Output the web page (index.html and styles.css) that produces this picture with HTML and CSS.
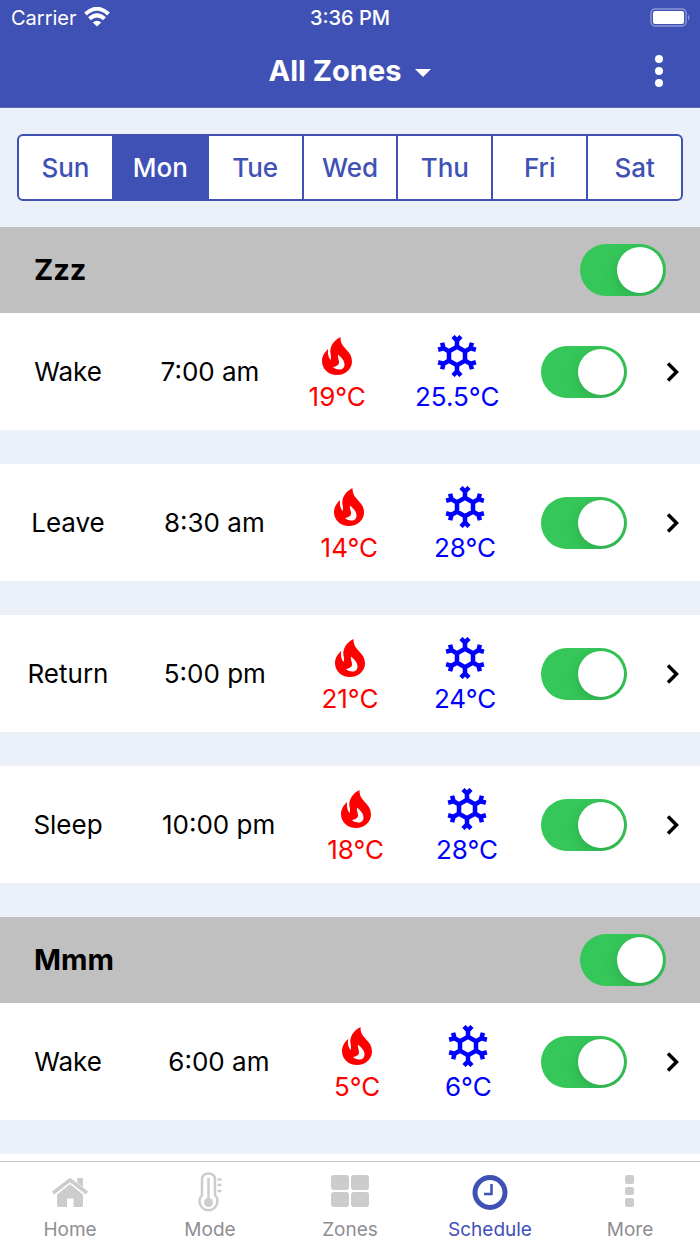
FILE: index.html
```html
<!DOCTYPE html>
<html lang="en">
<head>
<meta charset="utf-8">
<meta name="viewport" content="width=device-width, initial-scale=1">
<title>Schedule</title>
<link rel="stylesheet" href="styles.css">
</head>
<body>
<svg class="sprite" aria-hidden="true">
  <symbol id="flame" viewBox="0 0 30 38">
    <path fill-rule="evenodd" d="M18.500 0C11 4 7.500 10 8.500 16.500C9 19 9.500 21 8.500 23C6.500 20.500 5.500 17 6 12C2.500 15.500 0 19 0 24C0 32 6.500 38 15 38C23.500 38 30 32 30 24.500C30 12.500 18 12 18.500 0ZM16 17.500C19.500 20.500 22.500 23.500 22.500 27.500C22.500 30.500 20.500 32.500 17.500 32.500C14.500 32.500 12 31.500 11 30C14.500 29.500 16.500 28 17 26C17.500 23.500 15.500 21.500 16 17.500Z"/>
  </symbol>
  <symbol id="snow" viewBox="-21 -21 42 42">
    <g fill="none" stroke="currentColor" stroke-width="4.500">
      <path d="M0-9.200L8-4.600V4.600L0 9.200L-8 4.600V-4.600Z"/>
      <g id="arm"><path d="M0-8V-16M-4-19.500L0-15.500L4-19.500"/></g>
      <use href="#arm" transform="rotate(60)"/><use href="#arm" transform="rotate(120)"/><use href="#arm" transform="rotate(180)"/><use href="#arm" transform="rotate(240)"/><use href="#arm" transform="rotate(300)"/>
    </g>
  </symbol>
  <symbol id="chevron" viewBox="0 0 14 22"><path d="M2.500 2.500L11 11L2.500 19.500" fill="none" stroke="currentColor" stroke-width="3.500"/></symbol>
</svg>
<div class="app">
  <header class="top">
    <div class="status">
      <span class="carrier">Carrier
        <svg width="26" height="20" viewBox="0 0 26 20" fill="none" stroke="currentColor" stroke-width="4"><path d="M1.500 7Q13-3.500 24.500 7M5.500 11.800Q13 5 20.500 11.800"/><path d="M13 19.500L8.800 15.500Q13 12 17.200 15.500Z" fill="currentColor" stroke="none"/></svg>
      </span>
      <span class="clock">3:36 PM</span>
      <svg class="battery" width="41" height="20" viewBox="1 0 41 20"><rect x="2" y="1" width="35" height="17" rx="4" fill="none" stroke="#8c97d3" stroke-width="1.500"/><rect x="4" y="3" width="31" height="13" rx="2" fill="#fff"/><path d="M39 6.500Q42 9.500 39 12.500Z" fill="#8c97d3"/></svg>
    </div>
    <div class="titlebar">
      <button class="zone" type="button">All Zones <svg width="16" height="8" viewBox="0 0 16 8"><path d="M0 0H16L8 8Z" fill="currentColor"/></svg></button>
      <button class="menu" type="button" aria-label="Menu"><svg width="8" height="32" viewBox="0 0 8 32" fill="currentColor"><circle cx="4" cy="4" r="4"/><circle cx="4" cy="16" r="4"/><circle cx="4" cy="28" r="4"/></svg></button>
    </div>
  </header>
  <main class="content">
    <div class="days" role="group" aria-label="Day">
      <button class="day" type="button">Sun</button><button class="day selected" type="button" aria-pressed="true">Mon</button><button class="day" type="button">Tue</button><button class="day" type="button">Wed</button><button class="day" type="button">Thu</button><button class="day" type="button">Fri</button><button class="day" type="button">Sat</button>
    </div>
    <section>
      <div class="group"><h2 id="zzz">Zzz</h2><input class="switch" type="checkbox" role="switch" checked aria-labelledby="zzz"></div>
      <div class="row"><label class="name" for="s1">Wake</label><div class="values"><span>7:00 am</span><span class="temp heat"><svg class="flame"><use href="#flame"/></svg>19°C</span><span class="temp cool"><svg class="snow"><use href="#snow"/></svg>25.5°C</span></div><input class="switch" id="s1" type="checkbox" role="switch" checked><button class="next" type="button" aria-label="Edit Wake"><svg class="chevron"><use href="#chevron"/></svg></button></div>
      <div class="row"><label class="name" for="s2">Leave</label><div class="values"><span>8:30 am</span><span class="temp heat"><svg class="flame"><use href="#flame"/></svg>14°C</span><span class="temp cool"><svg class="snow"><use href="#snow"/></svg>28°C</span></div><input class="switch" id="s2" type="checkbox" role="switch" checked><button class="next" type="button" aria-label="Edit Leave"><svg class="chevron"><use href="#chevron"/></svg></button></div>
      <div class="row"><label class="name" for="s3">Return</label><div class="values"><span>5:00 pm</span><span class="temp heat"><svg class="flame"><use href="#flame"/></svg>21°C</span><span class="temp cool"><svg class="snow"><use href="#snow"/></svg>24°C</span></div><input class="switch" id="s3" type="checkbox" role="switch" checked><button class="next" type="button" aria-label="Edit Return"><svg class="chevron"><use href="#chevron"/></svg></button></div>
      <div class="row"><label class="name" for="s4">Sleep</label><div class="values"><span>10:00 pm</span><span class="temp heat"><svg class="flame"><use href="#flame"/></svg>18°C</span><span class="temp cool"><svg class="snow"><use href="#snow"/></svg>28°C</span></div><input class="switch" id="s4" type="checkbox" role="switch" checked><button class="next" type="button" aria-label="Edit Sleep"><svg class="chevron"><use href="#chevron"/></svg></button></div>
    </section>
    <section>
      <div class="group"><h2 id="mmm">Mmm</h2><input class="switch" type="checkbox" role="switch" checked aria-labelledby="mmm"></div>
      <div class="row"><label class="name" for="s5">Wake</label><div class="values"><span>6:00 am</span><span class="temp heat"><svg class="flame"><use href="#flame"/></svg>5°C</span><span class="temp cool"><svg class="snow"><use href="#snow"/></svg>6°C</span></div><input class="switch" id="s5" type="checkbox" role="switch" checked><button class="next" type="button" aria-label="Edit Wake"><svg class="chevron"><use href="#chevron"/></svg></button></div>
      <div class="row"></div>
    </section>
  </main>
  <nav class="tabs">
    <a class="tab" href="#home"><svg class="icon" viewBox="0 0 40 44"><g fill="currentColor"><path d="M20 13L33 23.500V34.500Q33 36 31.500 36H23.500V27.500H17V36H8.500Q7 36 7 34.500V23.500Z"/><path d="M27.500 7H33V18L27.500 13.500Z"/></g><path d="M3 22L20 9L37 22" fill="none" stroke="#fff" stroke-width="6"/><path d="M27.500 7H33V16L27.500 12Z" fill="currentColor"/><path d="M3 22L20 9L37 22" fill="none" stroke="currentColor" stroke-width="3.500" stroke-linejoin="round"/></svg>Home</a>
    <a class="tab" href="#mode"><svg class="icon" viewBox="0 0 40 44" fill="none" stroke="currentColor"><path stroke-width="2.500" d="M12 24V9Q12 2.500 18.500 2.500T25 9V24A9 9 0 1 1 12 24Z"/><path stroke-width="2.500" d="M18.500 7V32M27.500 8.500H31.500M27.500 14H31.500M27.500 20H31.500"/><circle cx="18.500" cy="31.500" r="4.500" fill="currentColor" stroke="none"/></svg>Mode</a>
    <a class="tab" href="#zones"><svg class="icon" viewBox="0 0 40 44" fill="currentColor"><rect x="1" y="4" width="18" height="15" rx="3"/><rect x="21" y="4" width="18" height="15" rx="3"/><rect x="1" y="21" width="18" height="15" rx="3"/><rect x="21" y="21" width="18" height="15" rx="3"/></svg>Zones</a>
    <a class="tab active" href="#schedule" aria-current="page"><svg class="icon" viewBox="0 0 40 44" fill="none" stroke="currentColor"><circle cx="20" cy="21.500" r="15" stroke-width="5"/><path d="M21.500 13V23H14" stroke-width="2.500"/></svg>Schedule</a>
    <a class="tab" href="#more"><svg class="icon" viewBox="0 0 40 44" fill="currentColor"><rect x="15" y="4" width="9" height="9" rx="2"/><rect x="15" y="16" width="9" height="8" rx="2"/><rect x="15" y="27" width="9" height="9" rx="2"/></svg>More</a>
  </nav>
</div>
</body>
</html>
```
FILE: styles.css
```css
* { box-sizing: border-box; }
body { margin: 0; font-family: Inter, "Liberation Sans", sans-serif; font-size: 26px; line-height: 32px; color: #000; }
button { border: 0; padding: 0; background: none; font: inherit; color: inherit; }
svg { display: block; }
.sprite { position: absolute; width: 0; height: 0; }
.app { height: 100vh; display: flex; flex-direction: column; background: #ecf0f9; }

.top { background: #3f51b5; color: #fff; border-bottom: 1px solid #5c6bc0; }
.status { display: grid; grid-template-columns: 1fr auto 1fr; align-items: center; height: 36px; padding: 0 9px; font-size: 20px; line-height: 24px; }
.carrier { display: flex; align-items: center; gap: 7px; padding-left: 2px; }
.carrier svg { margin-bottom: 2px; }
.clock { font-weight: 500; }
.battery { justify-self: end; }
.titlebar { display: grid; grid-template-columns: 1fr auto 1fr; align-items: center; height: 71px; padding: 0 37px 2px; }
.zone { grid-column: 2; display: flex; align-items: center; gap: 14px; font-size: 29px; font-weight: 700; }
.zone svg { margin-top: 4px; }
.menu { justify-self: end; }

.content { flex: 1; min-height: 0; overflow: hidden; }
.days { display: flex; margin: 26px 17px; border: 2px solid #3f51b5; border-radius: 6px; background: #fff; overflow: hidden; }
.day { flex: 1; height: 63px; color: #3f51b5; font-weight: 500; }
.day + .day { border-left: 2px solid #3f51b5; }
.day.selected { background: #3f51b5; color: #fff; }

.group { display: flex; align-items: center; justify-content: space-between; height: 86px; padding: 0 34px; background: #c0c0c0; }
.group h2 { margin: 0; font-size: 29px; font-weight: 700; }
.row { display: flex; align-items: center; height: 117px; margin-bottom: 34px; padding-right: 20px; background: #fff; }
.name { width: 136px; text-align: center; }
.values { flex: 1; display: flex; align-items: center; justify-content: space-around; margin-right: 17px; }
.temp { display: flex; flex-direction: column; align-items: center; gap: 8px; line-height: 24px; }
.heat { color: #f00; }
.cool { color: #00f; }
.flame { width: 30px; height: 38px; margin: 2px 0; fill: currentColor; }
.snow { width: 42px; height: 42px; }
.next { margin-left: 38px; }
.chevron { width: 15px; height: 22px; }

.switch { appearance: none; flex: none; width: 86px; height: 52px; margin: 0; padding: 3px; border-radius: 26px; background: #35c759; display: flex; justify-content: flex-end; overflow: hidden; }
.switch::before { content: ""; width: 46px; height: 46px; border-radius: 50%; background: #fff; box-shadow: 0 4px 14px rgba(0, 0, 0, 0.15); }

.tabs { display: flex; height: 83px; padding-top: 9px; border-top: 1px solid #c8c8c8; background: #fff; }
.tab { flex: 1; display: flex; flex-direction: column; align-items: center; gap: 2px; color: #8e8e93; font-size: 19px; line-height: 26px; text-decoration: none; }
.icon { flex: none; width: 40px; height: 44px; color: #ccc; }
.active, .active .icon { color: #3f51b5; }
```
